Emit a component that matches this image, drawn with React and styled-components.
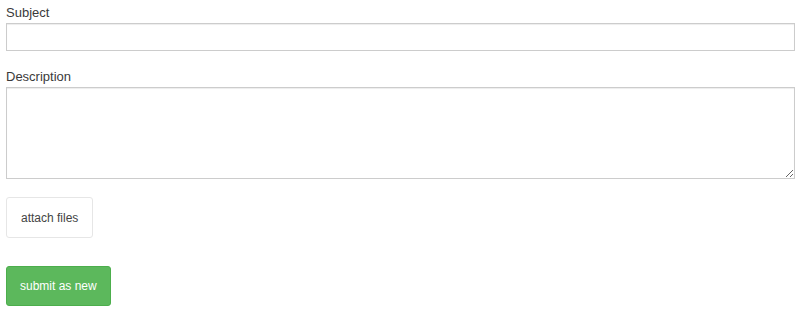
import React from 'react'
import styled, { createGlobalStyle } from 'styled-components'

const GlobalStyle = createGlobalStyle`
    body {
        margin: 0;
        background: #fff;
        font-family: "Liberation Sans", Arial, sans-serif;
        color: #333;
    }
`;

const Form = styled.form`
    padding: 4px 5px 0 6px;
`;

const Group = styled.div`
    margin-bottom: ${props => props.gap || 15}px;
`;

const Label = styled.label`
    display: block;
    font-size: 13px;
    line-height: 17px;
    margin-bottom: 2px;
    color: #3a3a3a;
`;

const fieldStyles = `
    display: block;
    width: 100%;
    box-sizing: border-box;
    border: 1px solid #ccc;
    border-radius: 0;
    background: #fff;
    box-shadow: inset 0 1px 1px rgba(0, 0, 0, .075);
    font-family: "Liberation Sans", Arial, sans-serif;
    font-size: 13px;
    color: #333;
    padding: 4px 8px;
    outline: none;
`;

const Input = styled.input`
    ${fieldStyles}
    height: 28px;
`;

const TextArea = styled.textarea`
    ${fieldStyles}
    height: 92px;
    resize: vertical;
`;

const Button = styled.button`
    display: block;
    box-sizing: border-box;
    height: ${props => props.height || 41}px;
    padding: 0 ${props => props.padX || 14}px;
    font-family: "Liberation Sans", Arial, sans-serif;
    font-size: 12px;
    border-radius: 3px;
    border: 1px solid ${props => props.primary ? '#4cae4c' : '#e6e6e6'};
    background: ${props => props.primary ? '#5cb85c' : '#fff'};
    color: ${props => props.primary ? '#fff' : '#444'};
    cursor: pointer;
`;

function App() {
    return (
        <>
            <GlobalStyle />
            <Form onSubmit={e => e.preventDefault()}>
                <Group gap={17}>
                    <Label htmlFor="subject">Subject</Label>
                    <Input id="subject" type="text" />
                </Group>
                <Group gap={18}>
                    <Label htmlFor="description">Description</Label>
                    <TextArea id="description" />
                </Group>
                <Group gap={28}>
                    <Button type="button">attach files</Button>
                </Group>
                <Button type="submit" primary height={40} padX={13}>submit as new</Button>
            </Form>
        </>
    )
}

export default App
